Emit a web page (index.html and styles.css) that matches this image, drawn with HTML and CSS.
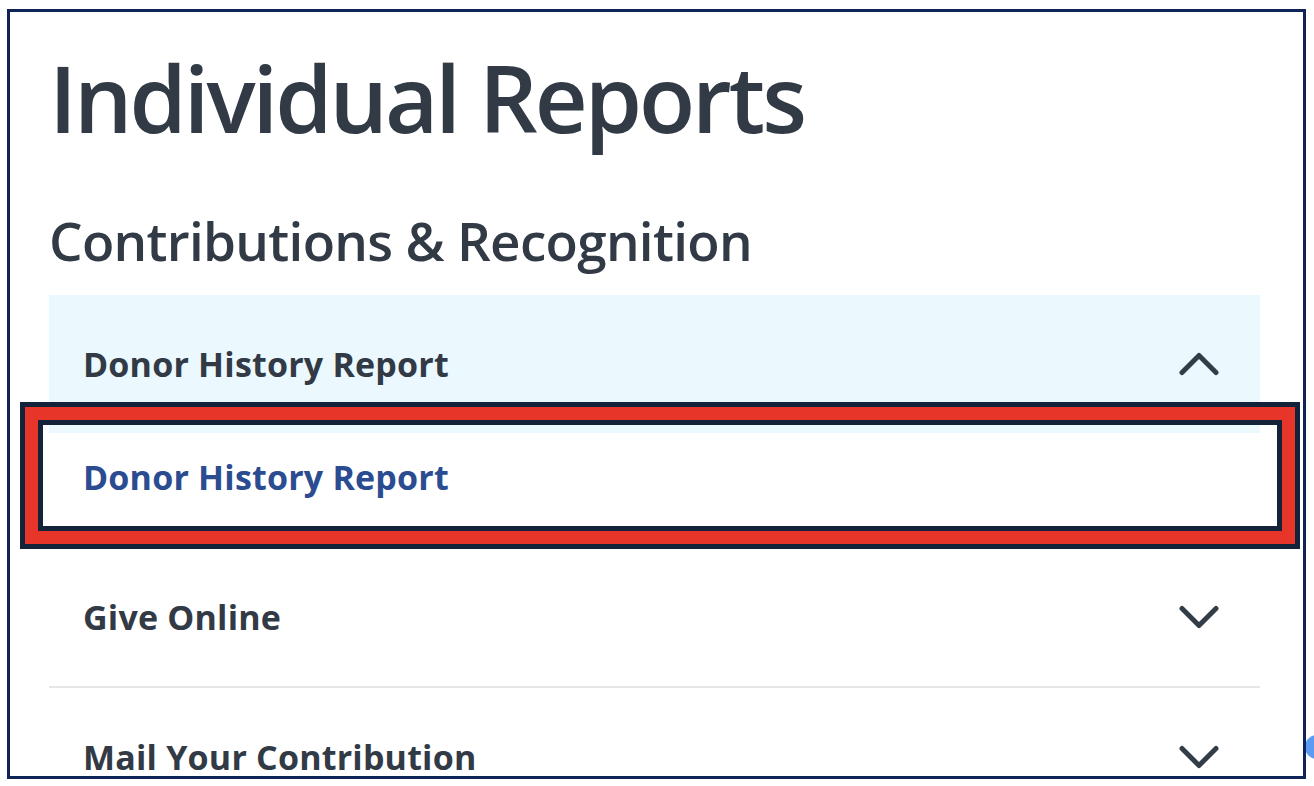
FILE: index.html
```html
<!DOCTYPE html>
<html lang="en">
<head>
<meta charset="utf-8">
<title>Individual Reports</title>
<link rel="stylesheet" href="styles.css">
</head>
<body>
<div class="frame">
  <div class="content">
    <h1 class="page-title">Individual Reports</h1>
    <h2 class="section-title">Contributions &amp; Recognition</h2>
    <div class="accordion">
      <div class="acc-item is-open">
        <div class="acc-header">
          <span class="acc-label">Donor History Report</span>
          <svg class="chevron" width="40" height="24" viewBox="0 0 40 24" aria-hidden="true"><polyline points="3,20.5 20,3.5 37,20.5"/></svg>
        </div>
        <div class="acc-panel">
          <a class="acc-link" href="#">Donor History Report</a>
          <div class="focus-ring"></div>
        </div>
      </div>
      <div class="acc-item">
        <div class="acc-header">
          <span class="acc-label">Give Online</span>
          <svg class="chevron" width="40" height="24" viewBox="0 0 40 24" aria-hidden="true"><polyline points="3,3.5 20,20.5 37,3.5"/></svg>
        </div>
      </div>
      <div class="acc-item">
        <div class="acc-header">
          <span class="acc-label">Mail Your Contribution</span>
          <svg class="chevron" width="40" height="24" viewBox="0 0 40 24" aria-hidden="true"><polyline points="3,3.5 20,20.5 37,3.5"/></svg>
        </div>
      </div>
    </div>
  </div>
</div>
<div class="chat-dot"></div>
</body>
</html>
```
FILE: styles.css
```css
html, body {
  margin: 0;
  padding: 0;
  background: #ffffff;
}

body {
  font-family: "Open Sans", "Liberation Sans", sans-serif;
  color: #313a45;
  position: relative;
  width: 1314px;
  height: 786px;
  overflow: hidden;
}

.frame {
  position: relative;
  z-index: 1;
  margin: 9px 0 0 7px;
  width: 1299px;
  height: 770px;
  box-sizing: border-box;
  border: 3px solid #0e2457;
  background: #ffffff;
  overflow: hidden;
}

.content {
  padding: 31px 43px 0 39px;
}

.page-title {
  margin: 0;
  font-size: 92px;
  font-weight: 600;
  line-height: 110px;
  color: #313a45;
  letter-spacing: -3px;
}

.section-title {
  margin: 56px 0 0;
  font-size: 53px;
  font-weight: 600;
  line-height: 64px;
  color: #313a45;
  letter-spacing: -0.7px;
}

.accordion {
  margin-top: 22px;
}

.acc-item {
  border-bottom: 2px solid #e6e6e6;
}

.acc-item.is-open {
  border-bottom: none;
}

.acc-header {
  height: 138px;
  box-sizing: border-box;
  display: flex;
  align-items: center;
  justify-content: space-between;
  padding: 0 41px 0 34px;
}

.is-open .acc-header {
  background: #ebf8fd;
}

.acc-label {
  font-size: 34px;
  font-weight: 700;
  line-height: 48px;
  letter-spacing: 0.2px;
  color: #313a45;
}

.chevron {
  display: block;
  fill: none;
  stroke: #333d48;
  stroke-width: 5;
  stroke-linecap: round;
  stroke-linejoin: round;
}

.acc-panel {
  position: relative;
  height: 115px;
  box-sizing: border-box;
  padding: 20px 34px 0;
}

.acc-link {
  display: block;
  font-size: 34px;
  font-weight: 700;
  line-height: 48px;
  letter-spacing: 0.2px;
  color: #2b4c91;
  text-decoration: none;
}

.focus-ring {
  position: absolute;
  left: -29px;
  right: -40px;
  top: -31px;
  bottom: -1px;
  border: 5px solid #13233a;
  box-shadow: inset 0 0 0 13px #e8352a;
  pointer-events: none;
}

.focus-ring::after {
  content: "";
  position: absolute;
  inset: 13px;
  border: 5px solid #13233a;
}

.chat-dot {
  position: absolute;
  z-index: 0;
  left: 1305px;
  top: 735px;
  width: 24px;
  height: 24px;
  border-radius: 50%;
  background: #5b9cf2;
}
```
